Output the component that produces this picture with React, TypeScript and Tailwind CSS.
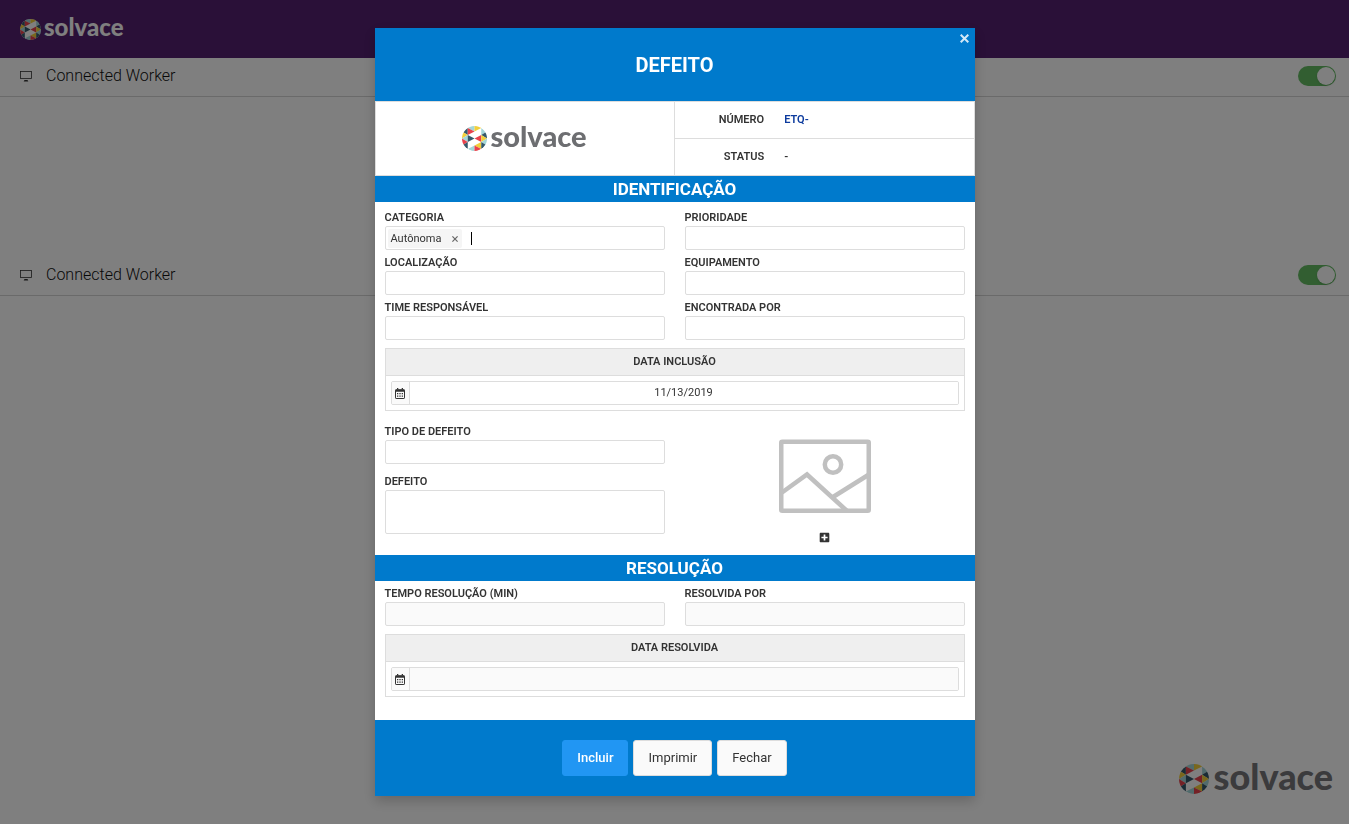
import { useState } from "react";
import type { ReactNode } from "react";
import { FaPlusSquare } from "react-icons/fa";

const TEAL = "#35596b";
const RED = "#e8424c";
const YELLOW = "#f2cf3b";
const SKY = "#a3d6d8";

const facets: [string, string][] = [
  ["23,8 23,36 0,22", TEAL],
  ["0,22 0,50 23,36", YELLOW],
  ["23,36 23,64 0,50", SKY],
  ["0,50 0,78 23,64", RED],
  ["0,22 0,-6 23,8", SKY],
  ["23,64 23,92 0,78", TEAL],
  ["0,78 23,92 0,106", SKY],
  ["23,8 50,-6 50,22", SKY],
  ["23,-8 50,-6 23,8", SKY],
  ["23,8 23,36 50,22", RED],
  ["23,36 50,50 23,64", TEAL],
  ["23,92 50,78 50,106", SKY],
  ["50,-6 50,22 77,8", YELLOW],
  ["50,-6 77,-8 77,8", YELLOW],
  ["50,50 77,36 77,64", RED],
  ["50,78 77,64 77,92", YELLOW],
  ["50,78 50,106 77,92", RED],
  ["77,8 77,36 100,22", SKY],
  ["100,22 100,50 77,36", TEAL],
  ["77,36 77,64 100,50", YELLOW],
  ["100,50 100,78 77,64", SKY],
  ["77,64 77,92 100,78", TEAL],
];

function LogoMark({ id, className }: { id: string; className: string }) {
  return (
    <svg viewBox="0 0 100 100" className={className} aria-hidden="true">
      <clipPath id={id}>
        <circle cx="50" cy="50" r="50" />
      </clipPath>
      <g clipPath={`url(#${id})`}>
        <rect width="100" height="100" fill="#fff" />
        {facets.map(([points, fill]) => (
          <polygon key={points} points={points} fill={fill} />
        ))}
      </g>
    </svg>
  );
}

function CalendarIcon() {
  return (
    <svg viewBox="0 0 10 11" className="h-[11px] w-[10px]" aria-hidden="true">
      <path d="M2 0h1.3v1.5H2zM6.7 0H8v1.5H6.7z" fill="currentColor" />
      <rect x="0.5" y="1.8" width="9" height="8.7" rx="0.6" fill="none" stroke="currentColor" />
      <path d="M0.5 1.5h9v2.2h-9z" fill="currentColor" />
      <path
        d="M2 5h1.3v1.3H2zM4.35 5h1.3v1.3h-1.3zM6.7 5H8v1.3H6.7zM2 7.4h1.3v1.3H2zM4.35 7.4h1.3v1.3h-1.3zM6.7 7.4H8v1.3H6.7z"
        fill="currentColor"
      />
    </svg>
  );
}

function ConnectedWorker({ id }: { id: string }) {
  const [on, setOn] = useState(true);
  return (
    <section className="h-[199px]">
      <div className="flex h-[39px] items-center border-b border-[#d4d4d4] pr-[13px] pb-0.5 pl-5">
        <svg viewBox="0 0 12 11" className="h-[11px] w-3 text-[#333]" aria-hidden="true">
          <rect x="0.5" y="0.5" width="11" height="7" fill="none" stroke="currentColor" strokeWidth="0.8" />
          <path d="M4.5 9h3l0.8 1.5h-4.6z" fill="currentColor" />
        </svg>
        <label htmlFor={id} className="ml-[14px] flex-1 text-base leading-5 font-light text-[#111]">
          Connected Worker
        </label>
        <input
          id={id}
          type="checkbox"
          role="switch"
          checked={on}
          onChange={(e) => setOn(e.target.checked)}
          className="flex h-5 w-[38px] appearance-none items-center rounded-full bg-[#bbb] px-px before:size-[18px] before:rounded-full before:bg-white before:shadow before:content-[''] checked:justify-end checked:bg-[#64bd63]"
        />
      </div>
    </section>
  );
}

function SectionBar({ children }: { children: ReactNode }) {
  return (
    <h2 className="bg-[#007acc] text-center text-[17px] leading-[26px] font-bold text-white">{children}</h2>
  );
}

const labelClass = "block pt-0.5 text-[11px] leading-4 font-semibold uppercase text-[#333]";
const boxClass = "block w-full rounded-[2px] border border-[#ddd] bg-white px-1 text-[11px] text-[#333] disabled:bg-[#fafafa]";

function Field({ id, label, disabled = false }: { id: string; label: string; disabled?: boolean }) {
  return (
    <div>
      <label htmlFor={id} className={labelClass}>
        {label}
      </label>
      <input id={id} type="text" disabled={disabled} className={`${boxClass} h-6`} />
    </div>
  );
}

function DateBox({ id, label, value, disabled = false }: { id: string; label: string; value: string; disabled?: boolean }) {
  return (
    <div className="mt-2 border border-[#ddd]">
      <label
        htmlFor={id}
        className="block border-b border-[#ddd] bg-[#efefef] text-center text-[11px] leading-[26px] font-semibold text-[#333] uppercase"
      >
        {label}
      </label>
      <div className="p-[5px]">
        <div className="flex h-6 overflow-hidden rounded-[2px] border border-[#ddd]">
          <span className="flex w-[18px] items-center justify-center border-r border-[#ddd] bg-[#fafafa] text-[#333]">
            <CalendarIcon />
          </span>
          <input
            id={id}
            type="text"
            defaultValue={value}
            disabled={disabled}
            className="min-w-0 flex-1 bg-white text-center text-[11px] text-[#333] disabled:bg-[#fafafa]"
          />
        </div>
      </div>
    </div>
  );
}

function DefectDialog() {
  return (
    <div
      role="dialog"
      aria-labelledby="dialog-title"
      className="relative w-full max-w-[600px] bg-white shadow-[0_5px_12px_rgba(0,0,0,0.2)]"
    >
      <header className="bg-[#007acc]">
        <h1 id="dialog-title" className="pt-0.5 text-center text-xl leading-[71px] font-bold text-white">
          DEFEITO
        </h1>
        <button type="button" aria-label="Fechar janela" className="absolute top-[5px] right-[5px] p-px text-[#d2e8f7]">
          <svg viewBox="0 0 9 9" className="size-[9px]" aria-hidden="true">
            <path d="M0.7 0.7l7.6 7.6M8.3 0.7L0.7 8.3" stroke="currentColor" strokeWidth="2" fill="none" />
          </svg>
        </button>
      </header>

      <div className="grid grid-cols-2 border border-[#ddd] text-[11px] font-semibold">
        <div className="flex items-center justify-center gap-[3px] border-r border-[#ddd] text-[#6d6e71]">
          <LogoMark id="mark-dialog" className="size-[25px]" />
          <span className="pb-1.5 font-['Lato',sans-serif] text-[29px] leading-8 font-black">solvace</span>
        </div>
        <dl>
          <div className="flex border-b border-[#ddd] leading-9">
            <dt className="w-1/3 pr-[10px] text-right text-[#333]">NÚMERO</dt>
            <dd className="pl-[10px] text-[#0d3b9e]">ETQ-</dd>
          </div>
          <div className="flex leading-9">
            <dt className="w-1/3 pr-[10px] text-right text-[#333]">STATUS</dt>
            <dd className="pl-[10px] text-[#333]">-</dd>
          </div>
        </dl>
      </div>

      <form onSubmit={(e) => e.preventDefault()}>
        <SectionBar>IDENTIFICAÇÃO</SectionBar>
        <div className="px-[10px] pt-1.5 pb-3">
          <div className="grid grid-cols-2 gap-x-5 gap-y-[3px]">
            <div>
              <label htmlFor="categoria" className={labelClass}>
                Categoria
              </label>
              <div className="flex h-6 items-center rounded-[2px] border border-[#ddd] px-0.5">
                <span className="flex h-[19px] items-center rounded-[2px] bg-[#f5f5f5] pt-0.5 pr-1 pl-[3px] text-[11px] text-[#333]">
                  Autônoma
                  <button type="button" aria-label="Remover Autônoma" className="ml-[11px] text-[#666]">
                    <svg viewBox="0 0 6 6" className="size-1.5" aria-hidden="true">
                      <path d="M0.4 0.4l5.2 5.2M5.6 0.4L0.4 5.6" stroke="currentColor" strokeWidth="1.2" />
                    </svg>
                  </button>
                </span>
                <span className="ml-[9px] h-[13px] w-px bg-black" aria-hidden="true" />
                <input id="categoria" type="text" className="h-5 min-w-0 flex-1 text-[11px] outline-none" />
              </div>
            </div>
            <Field id="prioridade" label="Prioridade" />
            <Field id="localizacao" label="Localização" />
            <Field id="equipamento" label="Equipamento" />
            <Field id="time" label="Time responsável" />
            <Field id="encontrada" label="Encontrada por" />
          </div>
          <DateBox id="data-inclusao" label="Data inclusão" value="11/13/2019" />
          <div className="mt-[11px] grid grid-cols-2 gap-x-5">
            <div className="flex flex-col gap-2">
              <Field id="tipo" label="Tipo de defeito" />
              <div>
                <label htmlFor="defeito" className={labelClass}>
                  Defeito
                </label>
                <textarea id="defeito" className={`${boxClass} h-11 resize-none`} />
              </div>
            </div>
            <div className="flex flex-col items-center pt-[17px]">
              <svg viewBox="0 0 92 75" className="h-[75px] w-[92px]" fill="none" stroke="#c0c0c0" strokeWidth="4.5" aria-hidden="true">
                <rect x="2.25" y="2.75" width="87.5" height="69" rx="1" />
                <circle cx="54" cy="25.5" r="8.2" />
                <path d="M3 53.5L28 35.5L68 72M54 58L90 35.5" />
              </svg>
              <button type="button" aria-label="Adicionar imagem" className="mt-[18px] text-[#333]">
                <FaPlusSquare className="size-[11px]" />
              </button>
            </div>
          </div>
        </div>

        <SectionBar>RESOLUÇÃO</SectionBar>
        <div className="px-[10px] pt-[3px] pb-[23px]">
          <div className="grid grid-cols-2 gap-x-5">
            <Field id="tempo" label="Tempo resolução (min)" disabled />
            <Field id="resolvida" label="Resolvida por" disabled />
          </div>
          <DateBox id="data-resolvida" label="Data resolvida" value="" disabled />
        </div>

        <footer className="flex justify-center gap-[5px] bg-[#007acc] p-5 text-[13px] text-[#333]">
          <button type="submit" className="h-9 rounded-[3px] border border-[#2196f3] bg-[#2196f3] px-[14px] font-medium text-white">
            Incluir
          </button>
          <button type="button" className="h-9 rounded-[3px] border border-[#ddd] bg-[#fafafa] px-[14px]">
            Imprimir
          </button>
          <button type="button" className="h-9 rounded-[3px] border border-[#ddd] bg-[#fafafa] px-[14px]">
            Fechar
          </button>
        </footer>
      </form>
    </div>
  );
}

export default function App() {
  return (
    <div className="flex min-h-screen flex-col bg-white font-['Roboto',sans-serif]">
      <header className="flex h-[58px] items-center gap-[3px] bg-[#542070] pl-5 text-white">
        <LogoMark id="mark-header" className="size-[21px]" />
        <span className="pb-1 font-['Lato',sans-serif] text-2xl leading-7 font-black">solvace</span>
      </header>
      <main className="flex-1">
        <ConnectedWorker id="worker-1" />
        <ConnectedWorker id="worker-2" />
      </main>
      <div className="flex items-center justify-end gap-[5px] pr-4 pb-[22px] text-[#76777a]">
        <LogoMark id="mark-footer" className="size-[30px]" />
        <span className="pb-1.5 font-['Lato',sans-serif] text-4xl leading-10 font-black">solvace</span>
      </div>
      <div className="fixed inset-0 flex items-start justify-center overflow-auto bg-black/50 pt-7">
        <DefectDialog />
      </div>
    </div>
  );
}
